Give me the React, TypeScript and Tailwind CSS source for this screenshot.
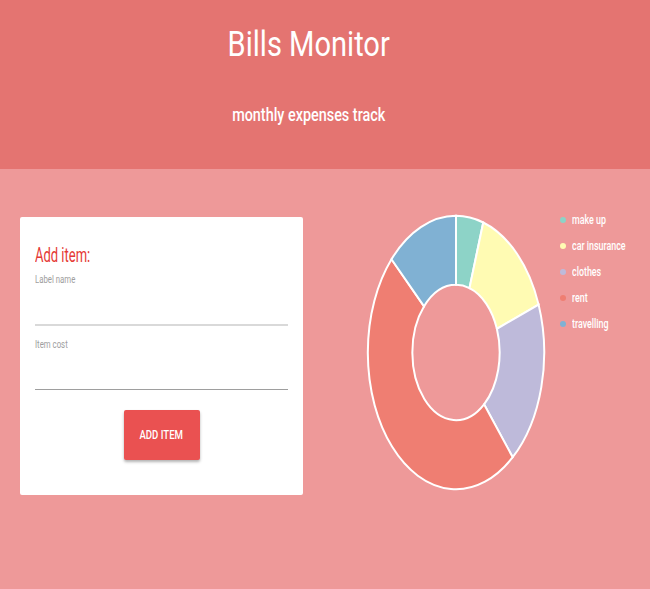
const slices = [
  { label: "make up", color: "#8dd3c7", start: 0, end: 18 },
  { label: "car insurance", color: "#fffbb3", start: 18, end: 69.5 },
  { label: "clothes", color: "#bebada", start: 69.5, end: 140 },
  { label: "rent", color: "#ef7e72", start: 140, end: 313 },
  { label: "travelling", color: "#80b1d3", start: 313, end: 360 },
];

const point = (r: number, deg: number) => {
  const a = (deg * Math.PI) / 180;
  return `${(100 + r * Math.sin(a)).toFixed(2)} ${(100 - r * Math.cos(a)).toFixed(2)}`;
};

const arc = (start: number, end: number, r: number, ri: number) => {
  const large = end - start > 180 ? 1 : 0;
  return [
    `M ${point(r, start)}`,
    `A ${r} ${r} 0 ${large} 1 ${point(r, end)}`,
    `L ${point(ri, end)}`,
    `A ${ri} ${ri} 0 ${large} 0 ${point(ri, start)}`,
    "Z",
  ].join(" ");
};

const Donut = () => {
  return (
    <svg
      width="180"
      height="279"
      viewBox="0 0 200 200"
      preserveAspectRatio="none"
      className="shrink-0 ml-[63px]"
    >
      {slices.map((s) => (
        <path
          key={s.label}
          d={arc(s.start, s.end, 98, 48.5)}
          fill={s.color}
          stroke="#ffffff"
          strokeWidth={2}
          vectorEffect="non-scaling-stroke"
        />
      ))}
    </svg>
  );
};

const App = () => {
  return (
    <div className="min-h-screen bg-[#ee9999] font-['Roboto',sans-serif]">
      {/* Header */}
      <header className="h-[169px] bg-[#e47471] text-white flex flex-col items-center pr-[32px]">
        <h1 className="mt-[27px] text-[35px] leading-none font-normal scale-x-[0.83]">
          Bills Monitor
        </h1>
        <p className="mt-[44px] text-[18px] leading-none font-medium scale-x-[0.8]">
          monthly expenses track
        </p>
      </header>

      <main className="flex items-start pl-5 pt-[44px]">
        {/* Form card */}
        <div className="mt-1 w-[283px] h-[278px] shrink-0 bg-white rounded-[2px] px-[15px] pt-[28px] flex flex-col">
          <h2 className="text-[20px] leading-none text-[#e53935] origin-left scale-x-[0.65]">
            Add item:
          </h2>
          <label className="mt-[10px] text-[10px] leading-none text-[#9e9e9e] origin-left scale-x-[0.78]">
            Label name
          </label>
          <input className="h-[41px] border-b-2 border-[#d9d9d9] outline-none" />
          <label className="mt-[14px] text-[10px] leading-none text-[#9e9e9e] origin-left scale-x-[0.78]">
            Item cost
          </label>
          <input className="h-[40px] border-b border-[#9e9e9e] outline-none" />
          <button className="mt-[20px] self-center w-[76px] h-[50px] bg-[#ea5151] rounded-[2px] text-white text-[12px] font-medium shadow-[0_2px_3px_rgba(0,0,0,0.3)]">
            <span className="inline-block scale-x-[0.8]">ADD ITEM</span>
          </button>
        </div>

        <Donut />

        {/* Legend */}
        <ul className="ml-[14px] -mt-[6px] flex flex-col">
          {slices.map((s) => (
            <li key={s.label} className="h-[26px] flex items-center gap-[6px] text-white text-[12px] font-medium">
              <span
                className="w-[6px] h-[6px] rounded-full"
                style={{ backgroundColor: s.color }}
              />
              <span className="origin-left scale-x-[0.74] whitespace-nowrap">{s.label}</span>
            </li>
          ))}
        </ul>
      </main>
    </div>
  );
};

export default App;
